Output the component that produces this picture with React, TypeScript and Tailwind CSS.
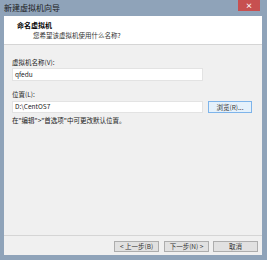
import React from 'react'

const FONT = { fontFamily: '"Microsoft YaHei", "Noto Sans CJK SC", "Liberation Sans", sans-serif' }

function Button({ children, focused = false, className = '' }: { children: React.ReactNode; focused?: boolean; className?: string }) {
  return (
    <div
      className={
        'flex items-center justify-center border text-[6.5px] leading-none text-[#333] ' +
        (focused ? 'border-[#7eb4ea] bg-[#e5f1fb] ' : 'border-[#adadad] bg-[#e1e1e1] ') +
        className
      }
    >
      {children}
    </div>
  )
}

export default function App() {
  return (
    <div className="flex h-[260px] w-[267px] flex-col bg-[#8fa3b9]" style={FONT}>
      {/* title bar */}
      <div className="flex h-[16px] shrink-0 items-start justify-between">
        <span className="ml-[4px] mt-[3px] text-[8px] leading-[10px] text-[#1a1a1a]">新建虚拟机向导</span>
        <div className="mr-[7px] flex h-[11px] w-[22px] items-center justify-center bg-[#c75050] text-[7px] font-bold leading-none text-white">
          ×
        </div>
      </div>

      {/* client area */}
      <div className="mb-[5px] ml-[4px] mr-[5px] flex flex-1 flex-col bg-[#f0f0f0]">
        <div className="h-[29px] shrink-0 border-b border-[#d5d5d5] bg-white pl-[13px] pt-[5px]">
          <p className="text-[7px] font-bold leading-[9px] text-black">命名虚拟机</p>
          <p className="ml-[16px] mt-[1px] text-[6.5px] leading-[8px] text-[#333]">您希望该虚拟机使用什么名称?</p>
        </div>

        <div className="flex-1 pl-[8px] pt-[13px]">
          <p className="text-[6.5px] leading-[8px] text-[#222]">虚拟机名称(V):</p>
          <div className="mt-[2px] flex h-[13px] w-[191px] items-center border border-[#e3e3e3] bg-white pl-[2px] text-[6.5px] text-[#222]">
            qfedu
          </div>

          <p className="mt-[9px] text-[6.5px] leading-[8px] text-[#222]">位置(L):</p>
          <div className="mt-[3px] flex items-center gap-[5px]">
            <div className="flex h-[12px] w-[191px] items-center border border-[#e3e3e3] bg-white pl-[2px] text-[6.5px] text-[#222]">
              D:\CentOS7
            </div>
            <Button focused className="h-[12px] w-[44px]">浏览(R)...</Button>
          </div>
          <p className="mt-[3px] text-[6.5px] leading-[8px] text-[#222]">在"编辑"&gt;"首选项"中可更改默认位置。</p>
        </div>

        <div className="flex h-[20px] shrink-0 items-center justify-end gap-[5px] border-t border-[#d5d5d5] pr-[4px] pt-[1px]">
          <Button className="h-[11px] w-[45px]">&lt; 上一步(B)</Button>
          <Button className="h-[11px] w-[45px]">下一步(N) &gt;</Button>
          <Button className="ml-[-1px] h-[11px] w-[45px]">取消</Button>
        </div>
      </div>
    </div>
  )
}
